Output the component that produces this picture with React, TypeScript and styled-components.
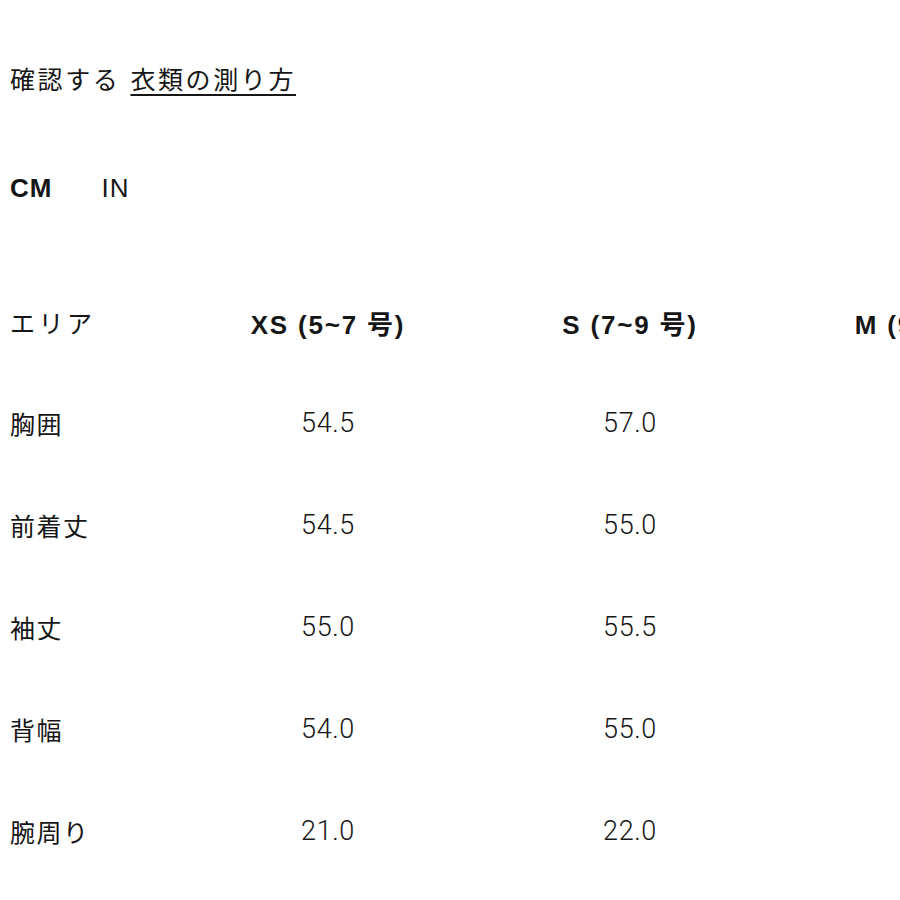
import React from "react";
import styled, { createGlobalStyle } from "styled-components";

const Global = createGlobalStyle`
  html, body { margin: 0; padding: 0; background: #fff; overflow: hidden; }
  body { color: #161616; font-family: "Liberation Sans", "Noto Sans CJK JP", sans-serif; }
`;

const Page = styled.div`
  width: 900px;
  height: 900px;
  overflow: hidden;
  padding: 58px 0 0 10px;
  box-sizing: border-box;
`;

const Title = styled.div`
  font-family: "Noto Sans CJK JP", sans-serif;
  font-size: 25px;
  line-height: 40px;
  letter-spacing: 2.6px;
  white-space: nowrap;
`;

const GuideLink = styled.a`
  color: inherit;
  margin-left: 10px;
  text-decoration: underline;
  text-decoration-thickness: 2px;
  text-underline-offset: 5px;
`;

const Units = styled.div`
  display: flex;
  gap: 49px;
  margin-top: 70px;
  line-height: 40px;
  font-size: 26px;
`;

const Unit = styled.span<{ $active?: boolean }>`
  font-weight: ${(p) => (p.$active ? 700 : 400)};
  letter-spacing: 1px;
`;

const Table = styled.div`
  margin-top: 64px;
  display: grid;
  grid-template-columns: 167px repeat(3, 302px);
  width: max-content;
`;

const HeadCell = styled.div<{ $label?: boolean }>`
  height: 100px;
  display: flex;
  align-items: center;
  justify-content: ${(p) => (p.$label ? "flex-start" : "center")};
  white-space: nowrap;
  font-family: ${(p) =>
    p.$label ? `"Noto Sans CJK JP", sans-serif` : `"Liberation Sans", "Noto Sans CJK JP", sans-serif`};
  font-weight: ${(p) => (p.$label ? 400 : 700)};
  font-size: ${(p) => (p.$label ? "25px" : "26px")};
  letter-spacing: ${(p) => (p.$label ? "3.5px" : "1.8px")};
`;

const Cell = styled.div<{ $label?: boolean }>`
  height: 102px;
  display: flex;
  align-items: center;
  justify-content: ${(p) => (p.$label ? "flex-start" : "center")};
  white-space: nowrap;
  font-family: ${(p) => (p.$label ? `"Noto Sans CJK JP", sans-serif` : `Roboto, sans-serif`)};
  font-weight: ${(p) => (p.$label ? 400 : 300)};
  font-size: ${(p) => (p.$label ? "25px" : "27px")};
  letter-spacing: ${(p) => (p.$label ? "1.5px" : "0.6px")};
`;

const sizes = ["XS (5~7 号)", "S (7~9 号)", "M (9~11 号)"];
const rows: [string, string[]][] = [
  ["胸囲", ["54.5", "57.0", "59.5"]],
  ["前着丈", ["54.5", "55.0", "56.0"]],
  ["袖丈", ["55.0", "55.5", "56.0"]],
  ["背幅", ["54.0", "55.0", "56.5"]],
  ["腕周り", ["21.0", "22.0", "23.0"]],
];

export default function App() {
  return (
    <>
      <Global />
      <Page>
        <Title>
          確認する<GuideLink href="#">衣類の測り方</GuideLink>
        </Title>
        <Units>
          <Unit $active>CM</Unit>
          <Unit>IN</Unit>
        </Units>
        <Table>
          <HeadCell $label>エリア</HeadCell>
          {sizes.map((s) => (
            <HeadCell key={s}>{s}</HeadCell>
          ))}
          {rows.map(([label, vals]) => (
            <React.Fragment key={label}>
              <Cell $label>{label}</Cell>
              {vals.map((v, i) => (
                <Cell key={i}>{v}</Cell>
              ))}
            </React.Fragment>
          ))}
        </Table>
      </Page>
    </>
  );
}
